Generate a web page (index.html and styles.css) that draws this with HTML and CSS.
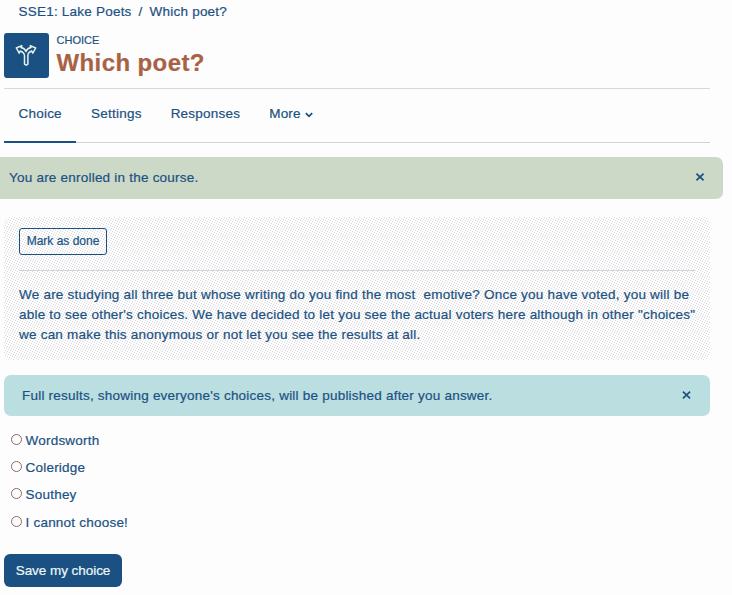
FILE: index.html
```html
<!DOCTYPE html>
<html lang="en">
<head>
<meta charset="utf-8">
<title>Which poet?</title>
<link rel="stylesheet" href="styles.css">
</head>
<body>
<nav class="breadcrumb"><a>SSE1: Lake Poets</a><span class="slash">/</span><a>Which poet?</a></nav>
<header class="page-header">
  <div class="activity-icon">
    <svg width="22" height="24" viewBox="0 0 22 24" fill="none" stroke="#e4f2ef" stroke-width="1.5" stroke-linejoin="round"><path d="M9.5 21V12.5Q9 9.2 5.2 8L4.2 10.2L1.3 5L6.8 2.6L6 4.6Q9.8 5.4 11 8.5Q12.2 5.4 16 4.6L15.2 2.6L20.7 5L17.8 10.2L16.8 8Q13 9.2 12.9 12.5V21Q11.2 23 9.5 21Z"/></svg>
  </div>
  <div class="heading">
    <div class="kind">CHOICE</div>
    <h1>Which poet?</h1>
  </div>
</header>
<nav class="tabs">
  <a class="tab active">Choice</a>
  <a class="tab">Settings</a>
  <a class="tab">Responses</a>
  <a class="tab">More<svg class="caret" width="8" height="6" viewBox="0 0 8 6" fill="none" stroke="#1b5182" stroke-width="1.8"><path d="M.8 1.2L4 4.3L7.2 1.2"/></svg></a>
</nav>
<div class="alert success"><span>You are enrolled in the course.</span><svg class="close" width="8" height="8" viewBox="0 0 8 8"><path d="M.4.7L7.6 7.3M7.6.7L.4 7.3"/></svg></div>
<section class="activity">
  <button class="done">Mark as done</button>
  <hr>
  <p>We are studying all three but whose writing do you find the most&nbsp; emotive? Once you have voted, you will be<br>able to see other's choices. We have decided to let you see the actual voters here although in other "choices"<br>we can make this anonymous or not let you see the results at all.</p>
</section>
<div class="alert info"><span>Full results, showing everyone's choices, will be published after you answer.</span><svg class="close" width="9" height="8" viewBox="0 0 8 8"><path d="M.4.7L7.6 7.3M7.6.7L.4 7.3"/></svg></div>
<form class="options">
  <label><input type="radio" name="poet"><span>Wordsworth</span></label>
  <label><input type="radio" name="poet"><span>Coleridge</span></label>
  <label><input type="radio" name="poet"><span>Southey</span></label>
  <label><input type="radio" name="poet"><span>I cannot choose!</span></label>
</form>
<button class="save">Save my choice</button>
</body>
</html>
```
FILE: styles.css
```css
* { box-sizing: border-box; }
body {
  margin: 0;
  height: 595px;
  overflow: hidden;
  background: #fdfdfd;
  color: #1b5182;
  font: 13.5px/20px "Liberation Sans", Arial, sans-serif;
  letter-spacing: .22px;
  -webkit-text-stroke: .2px;
}
.breadcrumb { height: 33px; padding: 1.5px 0 0 18.5px; }
.slash { margin: 0 7px; }
.page-header { display: flex; width: 706px; height: 56px; margin-left: 4px; border-bottom: 1px solid #d5d8dc; }
.activity-icon { width: 45px; height: 45px; padding: 10px 0 0 11px; border-radius: 3px; background: #1b5182; }
.heading { margin-left: 7.5px; }
.kind { font-size: 11px; line-height: 15px; letter-spacing: 0; }
h1 { margin: 0; font-size: 24px; line-height: 30px; letter-spacing: .4px; color: #a86144; }
.tabs { display: flex; width: 706px; height: 54px; margin-left: 4px; border-bottom: 1px solid #d0d4da; }
.tab { height: 54px; padding: 14.5px 14.5px 0; }
.active { width: 72px; margin-right: .6px; padding-right: 0; border-bottom: 2px solid #1b5182; }
.caret { margin-left: 4px; }
.alert { display: flex; justify-content: space-between; align-items: center; }
.close { fill: none; stroke: #1b5182; stroke-width: 1.7; margin-bottom: 2px; }
.success { width: 723px; height: 42px; margin-top: 14px; padding: 0 19px 1px 9px; border-radius: 0 7px 7px 0; background: #ccd9c7; }
.info { width: 706px; height: 41px; margin: 15px 0 0 4px; padding: 0 19px 0 18px; border-radius: 7px; background: #bbdee1; }
.activity {
  --dot: conic-gradient(at 1px 1px, transparent 75%, #d8dadd 0);
  width: 706px; height: 143px; margin: 18px 0 0 4px; padding: 11px 15px 10px; border-radius: 7px;
  background-color: #fdfdfd;
  background-image: var(--dot), var(--dot), var(--dot), var(--dot), var(--dot);
  background-size: 5px 5px;
  background-position: 0 0, 2px 1px, 4px 2px, 1px 3px, 3px 4px;
}
button { font: inherit; color: inherit; letter-spacing: inherit; }
.done { display: block; width: 88px; height: 27px; padding: 0 0 2px; border: 1px solid #1b5182; border-radius: 3px; background: transparent; font-size: 12px; letter-spacing: 0; }
hr { height: 1px; margin: 15px 0 14px; border: 0; background: #d0d4da; }
p { margin: 0; white-space: nowrap; }
.options { height: 124px; margin: 11px 0 0 10px; }
.options label { display: flex; align-items: center; height: 27.3px; }
.options input { appearance: none; width: 11px; height: 11px; margin: 0 3.5px 3px 1px; border: 1px solid #8c6a65; border-radius: 50%; background: #fdfdfd; }
.save { display: block; width: 118px; height: 33px; margin: 3px 0 0 4px; padding: 0; border: 0; border-radius: 6px; background: #1b5182; color: #edf7f7; letter-spacing: -.05px; }
```
